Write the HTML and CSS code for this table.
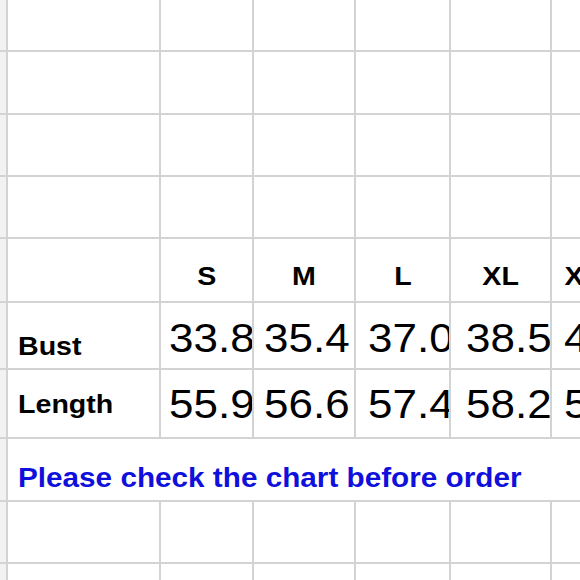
FILE: index.html
```html
<!DOCTYPE html>
<html>
<head>
<meta charset="utf-8">
<link rel="stylesheet" href="styles.css">
</head>
<body>
<div class="sheet">
  <!-- row 1 -->
  <div class="g"></div><div class="c"></div><div class="c"></div><div class="c"></div><div class="c"></div><div class="c"></div><div class="c"></div>
  <!-- row 2 -->
  <div class="g"></div><div class="c"></div><div class="c"></div><div class="c"></div><div class="c"></div><div class="c"></div><div class="c"></div>
  <!-- row 3 -->
  <div class="g"></div><div class="c"></div><div class="c"></div><div class="c"></div><div class="c"></div><div class="c"></div><div class="c"></div>
  <!-- row 4 -->
  <div class="g"></div><div class="c"></div><div class="c"></div><div class="c"></div><div class="c"></div><div class="c"></div><div class="c"></div>
  <!-- header row -->
  <div class="g"></div>
  <div class="c"></div>
  <div class="c head"><span class="t mid">S</span></div>
  <div class="c head"><span class="t mid">M</span></div>
  <div class="c head"><span class="t mid">L</span></div>
  <div class="c head"><span class="t mid">XL</span></div>
  <div class="c head"><span class="t mid">XXL</span></div>
  <!-- bust -->
  <div class="g"></div>
  <div class="c label bust-label"><span class="t">Bust</span></div>
  <div class="c num bust col-s"><span class="t">33.8</span></div>
  <div class="c num bust col-m"><span class="t">35.4</span></div>
  <div class="c num bust col-l"><span class="t">37.0</span></div>
  <div class="c num bust col-xl"><span class="t">38.5</span></div>
  <div class="c num bust col-xxl"><span class="t">40.1</span></div>
  <!-- length -->
  <div class="g"></div>
  <div class="c label len-label"><span class="t">Length</span></div>
  <div class="c num len col-s"><span class="t">55.9</span></div>
  <div class="c num len col-m"><span class="t">56.6</span></div>
  <div class="c num len col-l"><span class="t">57.4</span></div>
  <div class="c num len col-xl"><span class="t">58.2</span></div>
  <div class="c num len col-xxl"><span class="t">59.0</span></div>
  <!-- note -->
  <div class="g"></div>
  <div class="c note"><span class="t">Please check the chart before order</span></div>
  <!-- row 9 -->
  <div class="g"></div><div class="c"></div><div class="c"></div><div class="c"></div><div class="c"></div><div class="c"></div><div class="c"></div>
  <!-- row 10 -->
  <div class="g"></div><div class="c"></div><div class="c"></div><div class="c"></div><div class="c"></div><div class="c"></div><div class="c"></div>
</div>
</body>
</html>
```

FILE: styles.css
```css
html, body {
  margin: 0;
  padding: 0;
  background: #ffffff;
  overflow: hidden;
}

.sheet {
  width: 620px;
  height: 600px;
  display: grid;
  grid-template-columns: 6px 151px 91px 100px 93px 99px 80px;
  grid-template-rows: 50px 61px 60px 60px 62px 65px 67px 61px 60px 40px;
  gap: 2px;
  background: #d3d3d3;
  font-family: "Liberation Sans", Arial, Helvetica, sans-serif;
  color: #000000;
}

.g {
  background: #f2f2f2;
}

.c {
  background: #ffffff;
  overflow: hidden;
  white-space: nowrap;
  display: flex;
  align-items: flex-end;
  line-height: 1;
  min-width: 0;
  box-sizing: border-box;
}

/* the reference text is drawn about 10% wider than Arial */
.t {
  display: inline-block;
  transform: scaleX(1.1);
  transform-origin: left bottom;
}

.t.mid {
  transform-origin: center bottom;
}

.head {
  justify-content: center;
  font-weight: bold;
  font-size: 26px;
  padding-bottom: 12px;
}

.label {
  font-weight: bold;
  font-size: 26px;
  padding-left: 10px;
}

.bust-label {
  padding-bottom: 9px;
}

.len-label {
  padding-bottom: 20px;
}

.num {
  font-size: 40px;
  padding-left: 10px;
}

.col-s {
  padding-left: 8px;
}

.col-m {
  padding-left: 10px;
}

.col-l {
  padding-left: 12px;
}

.col-xl {
  padding-left: 15px;
}

.col-xxl {
  padding-left: 12px;
}

.bust {
  padding-bottom: 10px;
}

.len {
  padding-bottom: 13px;
}

.note {
  grid-column: 2 / -1;
  color: #1010dc;
  font-weight: bold;
  font-size: 27px;
  padding-left: 10px;
  padding-bottom: 8px;
}
```
